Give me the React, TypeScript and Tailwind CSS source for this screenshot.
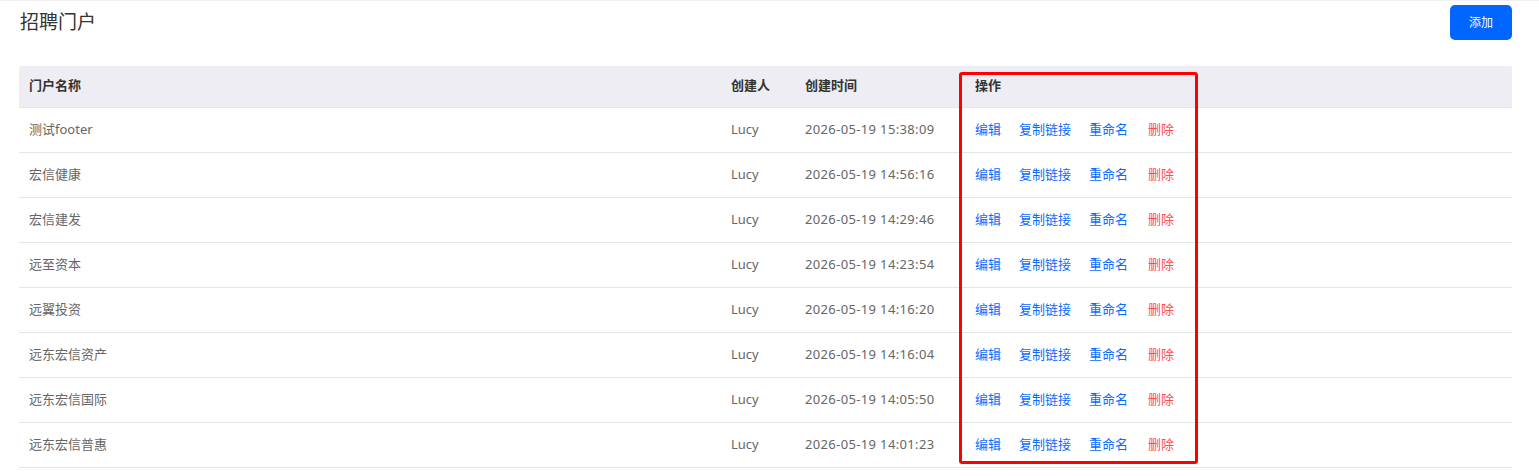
import { Fragment } from 'react'

type Portal = {
  name: string
  creator: string
  createdAt: string
}

const portals: Portal[] = [
  { name: '测试footer', creator: 'Lucy', createdAt: '2026-05-19 15:38:09' },
  { name: '宏信健康', creator: 'Lucy', createdAt: '2026-05-19 14:56:16' },
  { name: '宏信建发', creator: 'Lucy', createdAt: '2026-05-19 14:29:46' },
  { name: '远至资本', creator: 'Lucy', createdAt: '2026-05-19 14:23:54' },
  { name: '远翼投资', creator: 'Lucy', createdAt: '2026-05-19 14:16:20' },
  { name: '远东宏信资产', creator: 'Lucy', createdAt: '2026-05-19 14:16:04' },
  { name: '远东宏信国际', creator: 'Lucy', createdAt: '2026-05-19 14:05:50' },
  { name: '远东宏信普惠', creator: 'Lucy', createdAt: '2026-05-19 14:01:23' },
]

const cols = 'grid grid-cols-[702px_74px_170px_1fr]'

export default function App() {
  return (
    <div
      className="w-[1539px] h-[476px] bg-white border-t border-[#f0f0f0] overflow-hidden"
      style={{ fontFamily: '"Noto Sans", "Noto Sans CJK SC", sans-serif' }}
    >
      {/* Header */}
      <div className="flex items-start justify-between pl-[20px] pr-[27px] pt-[4px]">
        <h1 className="text-[19px] leading-[34px] text-[#333] font-normal">招聘门户</h1>
        <button className="w-[62px] h-[35px] rounded-[5px] bg-[#0066ff] text-white text-[12px]">
          添加
        </button>
      </div>

      {/* Table */}
      <div className="relative mt-[26px] ml-[19px] mr-[27px]">
        <div className={clsx(cols, 'h-[42px] items-center bg-[#ededf3] border-b border-[#e3e5ea] rounded-t-[2px] text-[13px] font-bold text-[#333]')}>
          <div className="pl-[10px] -mt-[2px]">门户名称</div>
          <div className="pl-[10px] -mt-[2px]">创建人</div>
          <div className="pl-[10px] -mt-[2px]">创建时间</div>
          <div className="pl-[10px] -mt-[2px]">操作</div>
        </div>
        {portals.map((p) => (
          <div
            key={p.createdAt}
            className={clsx(cols, 'h-[45px] items-center border-b border-[#e3e5ea] text-[13px] text-[#666]')}
          >
            <div className="pl-[10px]">{p.name}</div>
            <div className="pl-[10px]">{p.creator}</div>
            <div className="pl-[10px] tracking-[0.35px]">{p.createdAt}</div>
            <div className="pl-[10px] flex gap-[18px]">
              {['编辑', '复制链接', '重命名'].map((a) => (
                <Fragment key={a}>
                  <span className="text-[#0a6cff] cursor-pointer">{a}</span>
                </Fragment>
              ))}
              <span className="ml-[2px] text-[#ff4d4f] cursor-pointer">删除</span>
            </div>
          </div>
        ))}

        {/* highlight frame around the actions column */}
        <div className="absolute left-[940px] top-[6px] w-[239px] h-[392px] border-[3px] border-[#ff0000] rounded-[3px] pointer-events-none" />
      </div>
    </div>
  )
}

function clsx(...parts: string[]) {
  return parts.join(' ')
}
